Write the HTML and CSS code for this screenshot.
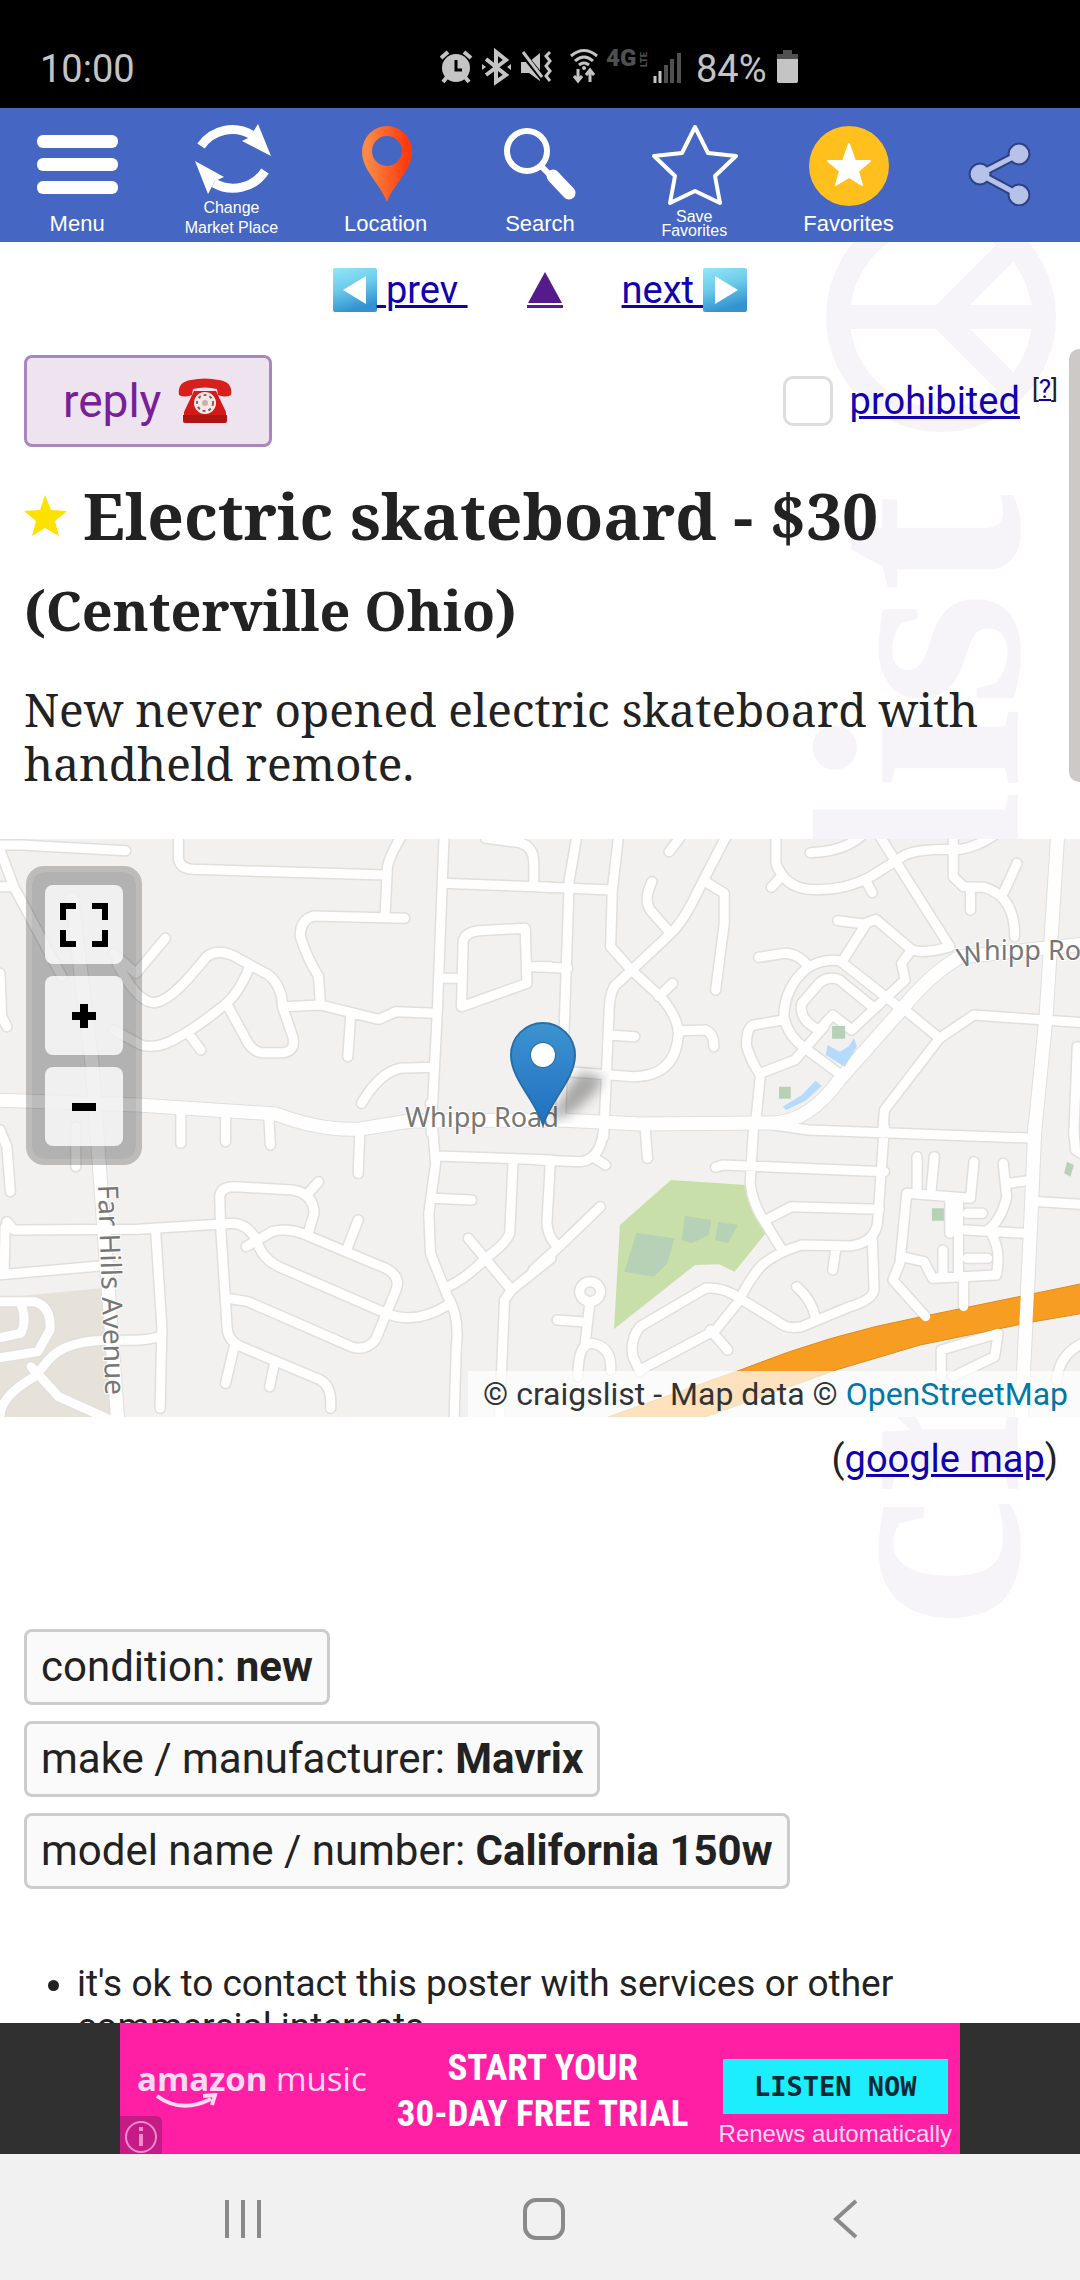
FILE: index.html
```html
<!DOCTYPE html>
<html lang="en">

<head>
    <meta charset="UTF-8">
    <meta name="viewport" content="width=device-width">
    <title>Electric skateboard - $30</title>
    <link rel="stylesheet" href="styles.css">
</head>

<body>
    <div class="status">
        <span class="time">10:00</span>
        <svg class="status-icons" width="244" height="40" viewBox="0 0 244 40" aria-hidden="true">
            <!-- alarm -->
            <g fill="none" stroke="#c4c4c4" stroke-width="4">
                <path d="M1 11L8 5M31 11L24 5M7 30L3 35M25 30L29 35"/>
                <circle cx="16" cy="21" r="14" fill="#c4c4c4" stroke="none"/>
                <path d="M16 13V23H22" stroke="#000" stroke-width="3"/>
            </g>
            <!-- bluetooth -->
            <path d="M46 12L66 28L56 35V5L66 13L46 28" fill="none" stroke="#c4c4c4" stroke-width="4"/>
            <path d="M42 17L46 20L42 23ZM71 17L67 20L71 23Z" fill="#c4c4c4"/>
            <!-- muted, vibrate -->
            <path d="M81 15H89L100 6V34L89 26H81Z" fill="#c4c4c4"/>
            <path d="M80 3L104 33" stroke="#000" stroke-width="6"/>
            <path d="M83 5L102 30" stroke="#c4c4c4" stroke-width="3"/>
            <path d="M110 5L106 9L110 14L106 19L110 24L106 29L110 34" fill="none" stroke="#c4c4c4" stroke-width="3"/>
            <!-- wifi -->
            <g fill="none" stroke="#c4c4c4" stroke-width="3">
                <path d="M131 9Q144 -2 157 9M135 14Q144 6 153 14M139 18Q144 14 149 18"/>
                <path d="M138 22V33M134 29L138 34L142 29M150 35V23M146 28L150 23L154 28"/>
            </g>
            <circle cx="144" cy="21" r="2" fill="#c4c4c4"/>
            <g fill="#505050" font-family="Roboto, sans-serif" font-weight="900">
                <text x="166" y="19" font-size="24">4G</text>
                <text transform="translate(207 20) rotate(-90)" font-size="9">LTE</text>
            </g>
            <path d="M215 29V36M220 24V36" stroke="#c4c4c4" stroke-width="3"/>
            <path d="M226 18V36M232 12V36M239 6V36" stroke="#505050" stroke-width="4"/>
        </svg>
        <span class="battery">84%</span>
        <svg width="22" height="34" viewBox="0 0 22 34" aria-hidden="true">
            <path d="M6 0H15V4H21V9H0V4H6Z" fill="#505050"/>
            <path d="M0 9H21V31Q21 33 19 33H2Q0 33 0 31Z" fill="#c4c4c4"/>
        </svg>
    </div>

    <nav class="toolbar">
        <button type="button">
            <svg viewBox="0 0 90 84"><g fill="#fff"><rect x="5" y="13" width="81" height="13" rx="6"/><rect x="5" y="36" width="81" height="13" rx="6"/><rect x="5" y="59" width="81" height="13" rx="6"/></g></svg>
            <span>Menu</span>
        </button>
        <button type="button" class="change">
            <svg viewBox="0 0 90 76">
                <path d="M15 24A38 38 0 0 1 66 13M79 49A38 38 0 0 1 28 61" fill="none" stroke="#fff" stroke-width="9"/>
                <path d="M72 2L85 34L56 19L64 15ZM9 39L38 55L29 59L22 72Z" fill="#fff"/>
            </svg>
            <span class="small">Change<br>Market Place</span>
        </button>
        <button type="button">
            <svg viewBox="0 0 90 84">
                <defs><linearGradient id="pin" x1="0" y1="0" x2="1" y2="0"><stop offset="0.1" stop-color="#f98a45"/><stop offset="0.9" stop-color="#ff3a0c"/></linearGradient></defs>
                <path d="M46 80C38 60 21 48 21 30A25 26 0 0 1 71 30C71 48 54 60 46 80ZM46 14A15 15 0 1 0 46 44A15 15 0 1 0 46 14Z" fill="url(#pin)" fill-rule="evenodd"/>
            </svg>
            <span>Location</span>
        </button>
        <button type="button">
            <svg viewBox="0 0 90 84">
                <circle cx="32" cy="29" r="20" fill="none" stroke="#fff" stroke-width="6"/>
                <path d="M45 43L56 54" stroke="#fff" stroke-width="6"/>
                <path d="M58 54L74 71" stroke="#fff" stroke-width="13" stroke-linecap="round"/>
            </svg>
            <span>Search</span>
        </button>
        <button type="button">
            <svg viewBox="0 0 90 84"><path d="M46 5L59 31L87 34L66 54L71 81L46 69L21 81L26 54L5 34L33 31Z" fill="none" stroke="#fff" stroke-width="4" stroke-linejoin="round"/></svg>
            <span class="small tight">Save<br>Favorites</span>
        </button>
        <button type="button">
            <svg viewBox="0 0 90 84">
                <circle cx="45" cy="44" r="40" fill="#ffc01e"/>
                <path d="M45 22L51 39L66 39L54 49L58 63L45 55L32 63L36 49L24 39L39 39Z" fill="#fff" stroke="#fff" stroke-width="2" stroke-linejoin="round"/>
            </svg>
            <span>Favorites</span>
        </button>
        <button type="button" aria-label="Share">
            <svg viewBox="0 0 90 84">
                <g stroke="#2d4083" fill="#2d4083"><path d="M61 32L22 52L61 73" fill="none" stroke-width="9"/><circle cx="22" cy="52" r="11"/><circle cx="61" cy="32" r="11"/><circle cx="61" cy="73" r="11"/></g>
                <g stroke="#b6c2e8" fill="#b6c2e8"><path d="M61 32L22 52L61 73" fill="none" stroke-width="5"/><circle cx="22" cy="52" r="9"/><circle cx="61" cy="32" r="9"/><circle cx="61" cy="73" r="9"/></g>
            </svg>
        </button>
    </nav>

    <main class="page">
        <!-- rotated site name behind the posting -->
        <svg class="watermark" width="280" height="1400" viewBox="800 242 280 1400" aria-hidden="true">
            <g fill="none" stroke="#f6f4f9" stroke-width="24">
                <circle cx="941" cy="317" r="103"/>
                <path d="M838 317H1044M941 317L1014 244M941 317L1014 390"/>
            </g>
            <text transform="translate(1018 1628) rotate(-90)" font-size="296" fill="#f6f4f9">craigslist</text>
        </svg>
        <div class="scrollbar"></div>

        <div class="pager">
            <a href="#"><svg width="44" height="44" viewBox="0 0 44 44"><defs><linearGradient id="sky" x1="0" y1="0" x2="0.3" y2="1"><stop offset="0" stop-color="#93e6f8"/><stop offset="0.5" stop-color="#6ccbea"/><stop offset="1" stop-color="#3392cf"/></linearGradient></defs><rect width="44" height="44" rx="2" fill="url(#sky)"/><path d="M10 22L33 8V36Z" fill="#fff"/></svg>&nbsp;prev&nbsp;</a>
            <a class="up" href="#" aria-label="up"><svg width="36" height="32" viewBox="0 0 36 32"><path d="M18 0L35 31H1Z" fill="#551a8b"/></svg></a>
            <a href="#">next&nbsp;<svg width="44" height="44" viewBox="0 0 44 44"><rect width="44" height="44" rx="2" fill="url(#sky)"/><path d="M35 22L12 8V36Z" fill="#fff"/></svg></a>
        </div>

        <div class="actions">
            <button type="button" class="reply">reply
                <svg width="56" height="46" viewBox="0 0 56 46" aria-hidden="true">
                    <path d="M2 17Q0 4 14 2Q28 -1 42 2Q56 4 54 17Q49 20 41 17L40 11Q28 8 16 11L15 17Q7 20 2 17Z" fill="#d91f1c"/>
                    <path d="M17 13H39L49 34V38H7V34Z" fill="#d31a18"/>
                    <path d="M6 37H50V43Q50 45 48 45H8Q6 45 6 43Z" fill="#b31412"/>
                    <circle cx="28" cy="25" r="11" fill="#f3e9e6"/>
                    <circle cx="28" cy="25" r="8" fill="none" stroke="#8c5a57" stroke-width="2" stroke-dasharray="3 3"/>
                    <circle cx="28" cy="25" r="3" fill="#c8b0ad"/>
                </svg>
            </button>
            <div class="flag">
                <input type="checkbox" id="prohibited">
                <label for="prohibited"><a href="#">prohibited</a></label>
                <sup>[<a href="#">?</a>]</sup>
            </div>
        </div>

        <h1>
            <svg width="43" height="42" viewBox="0 0 43 42" aria-hidden="true"><path d="M21 0L27 15L43 16L31 26L35 41L21 33L8 41L12 26L0 16L16 15Z" fill="#ffe100"/></svg>
            Electric skateboard - $30
        </h1>
        <h2>(Centerville Ohio)</h2>
        <p class="body">New never opened electric skateboard with handheld remote.</p>

        <div class="map">
            <svg class="map-canvas" viewBox="0 0 1080 578" preserveAspectRatio="xMidYMid slice" aria-hidden="true">
                <defs>
                    <g id="roads">
                        <g transform="translate(0 -9) scale(.3444 .3333)">
                            <path d="M-10 45H60L365 62M0 60L40 170L180 440M-20 170H40M0 430L5 560L20 590M480 325L395 430L330 370M340 400Q400 520 450 518C500 510 560 430 600 380Q640 350 700 390L780 435Q820 470 820 530L850 620Q860 665 820 668H760Q730 665 710 620L660 525M725 410Q690 500 640 535Q560 600 520 620Q460 660 410 645L330 600M550 615L583 660"/>
                            <path d="M518 0V85Q522 115 560 118L1120 135M1170 10Q1130 80 1125 110L1118 255M1175 265L910 258Q870 270 872 320Q890 380 925 440L930 520M825 530L930 525L1100 568L1150 545L1265 550M1018 560L1010 680M1290 0L1270 540L1252 910M1050 820Q1100 730 1160 715L1255 712M1285 160L1600 172M1410 25L1510 38Q1550 50 1550 100V165M1275 445H1340M1340 530L1345 330Q1355 305 1390 302L1525 295L1530 460ZM1530 410H1600M525 850V940M655 850V935M780 850L785 945"/>
                        </g>
                        <g transform="translate(540 -9) scale(.3444 .3333)">
                            <path d="M110 0L85 150L70 600L60 860M230 0L210 180L205 350L265 420L350 500Q400 560 402 610Q395 740 270 740L80 725M-10 170L205 180M-10 410L80 415M540 20L460 180Q420 270 380 310L215 470Q200 500 200 560L185 920M405 25L375 65M325 155Q300 210 320 240L375 305M480 155L535 190V280L510 480M385 460L345 500M200 615L275 620M405 602L480 600Q505 610 505 650"/>
                            <path d="M685 0V100Q710 170 780 178Q880 185 960 140L1060 75Q1100 55 1220 58Q1270 50 1320 15M700 140L672 172M945 150L965 188M785 68Q880 65 930 20M975 0L1190 350M1200 0V140L1230 170L1290 172Q1380 200 1378 320M1385 100L1345 190M1250 175V240M865 272L940 282L975 268L1080 360Q1120 372 1190 350M945 285L880 390M635 382L710 370Q750 370 780 410"/>
                            <path d="M1040 530L870 392Q820 385 775 415Q710 470 708 560Q720 620 770 655L880 740M965 530L870 450Q840 435 810 460L760 520Q750 570 810 600L850 555L905 600L1060 450L1050 400L1075 365M825 590L740 690L640 730M705 570L620 585Q598 595 600 650Q615 700 640 735L625 890M1060 540L1160 625L1000 840L995 910M1160 625L1260 555L1600 580M1560 650L1550 920"/>
                        </g>
                        <g transform="translate(0 291) scale(.3444 .3333)">
                            <path d="M1250 -80L1265 100L1245 250L1250 370L1300 500Q1335 560 1325 650L1318 880M1045 0L1040 130M1270 78L1600 90M1490 90L1480 310Q1470 340 1410 385Q1350 450 1290 475M1360 325L1485 480L1465 510L1450 880M1485 480L1600 385M1260 205L1370 210M0 0L20 50L30 185M220 -10V110M20 275L40 300L400 298L680 280Q720 285 745 330Q760 390 820 415L1110 545Q1200 590 1300 525M15 290L12 420M-10 435L290 408M452 305L470 590L465 835"/>
                            <path d="M470 615Q440 635 330 630Q200 630 150 680L100 740Q0 800 0 860M90 710L170 800L320 870M-10 515H100Q150 530 145 600L110 665L-10 685M60 520Q80 570 60 610L-10 625M640 280L638 200Q640 170 680 170L850 180Q910 190 912 250L895 310M925 155L895 190M715 350L790 305Q840 290 900 320L1120 415Q1165 440 1150 480L1090 630Q1060 665 1020 650L720 515L660 505M1040 270L1010 350M640 280L660 600Q665 635 700 650L930 750Q965 770 960 835M680 650L655 760M795 710L783 770"/>
                        </g>
                        <g transform="translate(540 291) scale(.3444 .3333)">
                            <path d="M-10 90L120 95Q180 85 185 -10M160 85L190 105M30 95L20 280Q25 330 55 350L-20 420M175 230L55 350M305 -10L312 85M620 -10L610 160Q620 230 655 280L700 355M510 112L530 105L1000 125M680 -15L780 0L1440 25M1000 -10L980 280Q970 340 900 348L760 345Q680 370 640 410Q600 460 580 510L510 600L290 720M655 270L730 230L985 238M860 350L850 420M745 470Q790 510 800 565M965 330L970 480Q965 510 900 530L760 590Q720 600 690 575L580 505Q530 470 480 475L290 590Q260 630 270 680L290 725M495 600L545 660"/>
                            <path d="M50 570L120 575M145 455A30 30 0 1 0 146 455M145 515L130 650M110 740Q110 640 150 640Q210 650 205 720M1095 80V185M1145 80L1135 190M1260 95L1250 205L1065 190L1045 400L1025 450L1120 560M1345 100L1355 200Q1340 270 1300 300M1430 150L1360 160M1215 205V440M1190 210V310M1240 250H1285M1235 300L1410 310M1310 310Q1340 360 1325 435L1140 445L1115 395L1050 380M1170 360V440M1240 385H1300M1230 440V530M1450 215L1600 225M1550 0L1555 60L1600 90M1165 740V660L1330 610L1320 680L1200 740M1600 630Q1510 660 1500 750"/>
                        </g>
                    </g>
                    <g id="avenues">
                        <path d="M-5 261L138 266L276 275Q320 292 360 290L410 282L560 281L640 285L774 284Q810 282 840 240L902 170Q930 135 960 118L1085 105M72 60L92 225L118 585M1058 -9L1046 178L1034 300M1035 285L1030 400L1021 585"/>
                    </g>
                    <linearGradient id="marker" x1="0" y1="0" x2="0" y2="1"><stop offset="0" stop-color="#3d93d0"/><stop offset="1" stop-color="#2070c0"/></linearGradient>
                    <filter id="soft"><feGaussianBlur stdDeviation="6"/></filter>
                </defs>
                <rect width="1080" height="578" fill="#f2f1f0"/>
                <path d="M0 459L103 449L119 578H0Z" fill="#e6e2da"/>
                <g transform="translate(540 291) scale(.3444 .3333)">
                    <path d="M380 150L600 165L655 310L565 425L520 403L450 405L215 597L232 285Z" fill="#c9dfa9"/>
                    <path d="M280 308L390 325L370 400L330 440L245 425ZM420 258L498 270L490 315L440 340L412 330ZM518 275L575 285L545 340L508 330ZM1138 235H1175V272H1138ZM1530 95L1550 105L1540 140L1522 130Z" fill="#b7d1b6"/>
                </g>
                <use href="#roads" class="casing"/>
                <use href="#avenues" class="casing wide"/>
                <path d="M608 578L743 530Q830 495 920 478L1085 444V474L1032 483L920 506L836 531L705 578Z" fill="#f79e22" stroke="#dd8c20"/>
                <use href="#roads" class="road"/>
                <use href="#avenues" class="road wide"/>
                <g transform="translate(540 -9) scale(.3444 .3333)">
                    <path d="M848 588H886V626H848ZM694 770H728V806H694Z" fill="#b7d1b6"/>
                    <path d="M835 645L870 665L895 650L912 625L920 650L885 710L830 675ZM705 830L760 795L800 752L818 768L770 812L715 840Z" fill="#b5dafc"/>
                </g>
                <g class="street">
                    <text x="405" y="288">Whipp Road</text>
                    <text x="984" y="121">hipp Road</text>
                    <text transform="translate(961 129) rotate(-18)">W</text>
                    <text class="long" transform="translate(98 346) rotate(88)">Far Hills Avenue</text>
                </g>
                <path d="M548 278L580 232L604 238Q594 262 560 280Z" opacity=".3" filter="url(#soft)"/>
                <path d="M543 286C536 262 511 240 511 216A32 32 0 0 1 575 216C575 240 550 262 543 286ZM543 204A12 12 0 1 0 543 228A12 12 0 1 0 543 204Z" fill="url(#marker)" stroke="#2a6da6" stroke-width="2" fill-rule="evenodd"/>
                <circle cx="543" cy="216" r="12" fill="#fff"/>
            </svg>
            <div class="controls">
                <button type="button" aria-label="Full screen"><svg width="48" height="44" viewBox="0 0 48 44"><path d="M3 17V3H16M32 3H45V17M45 27V41H32M16 41H3V27" fill="none" stroke="#000" stroke-width="6"/></svg></button>
                <button type="button" aria-label="Zoom in"><svg width="24" height="24" viewBox="0 0 24 24"><path d="M0 12H24M12 0V24" stroke="#000" stroke-width="8"/></svg></button>
                <button type="button" aria-label="Zoom out"><svg width="24" height="24" viewBox="0 0 24 24"><path d="M0 12H24" stroke="#000" stroke-width="8"/></svg></button>
            </div>
            <div class="credit">© craigslist - Map data © <a href="#">OpenStreetMap</a></div>
        </div>
        <p class="google">(<a href="#">google map</a>)</p>

        <div class="attrs">
            <span>condition: <b>new</b></span>
            <span>make / manufacturer: <b>Mavrix</b></span>
            <span>model name / number: <b>California 150w</b></span>
        </div>

        <ul class="notices">
            <li>it's ok to contact this poster with services or other commercial interests</li>
        </ul>
    </main>

    <aside class="ad">
        <div class="banner">
            <div class="brand"><b>amazon</b> music
                <svg width="64" height="16" viewBox="0 0 64 16" aria-hidden="true"><path d="M2 3Q26 21 56 6M48 3L60 2L57 12" fill="none" stroke="#ffd9f2" stroke-width="4"/></svg>
            </div>
            <div class="pitch">START YOUR<br>30-DAY FREE TRIAL</div>
            <div class="offer">
                <button type="button">LISTEN NOW</button>
                <span>Renews automatically</span>
            </div>
            <svg class="info" width="42" height="38" viewBox="0 0 42 38" aria-hidden="true"><path d="M0 0H36Q42 0 42 6V38H0Z" fill="#c51b86"/><g fill="none" stroke="#f38bcb" stroke-width="2"><circle cx="21" cy="21" r="15"/><path d="M21 18V30M21 11V15" stroke-width="4"/></g></svg>
        </div>
    </aside>

    <nav class="keys">
        <button type="button" aria-label="Recents"><svg width="42" height="42" viewBox="0 0 42 42"><path d="M5 2V40M21 2V40M37 2V40"/></svg></button>
        <button type="button" aria-label="Home"><svg width="42" height="42" viewBox="0 0 42 42"><rect x="2" y="2" width="38" height="38" rx="11"/></svg></button>
        <button type="button" aria-label="Back"><svg width="42" height="42" viewBox="0 0 42 42"><path d="M32 3L12 21L32 39"/></svg></button>
    </nav>
</body>

</html>
```

FILE: styles.css
```css
* {
    box-sizing: border-box;
    margin: 0;
    padding: 0;
}
body {
    display: flex;
    flex-direction: column;
    height: 100vh;
    background: #fff;
    color: #222;
    font-family: Roboto, sans-serif;
    font-size: 38px;
}
button {
    border: 0;
    background: none;
    font: inherit;
    color: inherit;
}
a {
    color: #1000b0;
    text-decoration-thickness: 3px;
}

/* phone status bar */
.status {
    flex: none;
    display: flex;
    align-items: center;
    height: 108px;
    padding: 26px 40px 0;
    background: #000;
    color: #c4c4c4;
}
.time {
    width: 400px;
}
.battery {
    margin: 0 10px 0 12px;
}
.time, .battery {
    padding-top: 3px;
}

.toolbar {
    flex: none;
    display: grid;
    grid-template-columns: repeat(7, 1fr);
    height: 134px;
    padding: 14px 0 4px;
    background: #4566c2;
    color: #fff;
    font-family: "Liberation Sans", sans-serif;
    font-size: 22px;
    line-height: 28px;
}
.toolbar button {
    display: flex;
    flex-direction: column;
    align-items: center;
    justify-content: space-between;
}
.toolbar svg {
    flex: none;
    width: 90px;
    height: 84px;
}
.toolbar .change svg {
    height: 76px;
}
.toolbar .small {
    font-size: 16px;
    line-height: 20px;
}
.toolbar .tight {
    line-height: 14px;
}

/* posting */
.page {
    flex: 1;
    min-height: 0;
    position: relative;
    z-index: 0;
    overflow: hidden;
}
.watermark {
    position: absolute;
    top: 0;
    right: 0;
    z-index: -1;
    font-family: "Liberation Serif", serif;
    font-weight: bold;
}
.scrollbar {
    position: absolute;
    top: 107px;
    right: 0;
    width: 11px;
    height: 433px;
    border-radius: 10px 0 0 10px;
    background: #cdc9c6;
}
.pager {
    display: flex;
    justify-content: center;
    align-items: center;
    gap: 59px;
    height: 96px;
}
.pager svg {
    vertical-align: -9px;
}
.pager .up {
    height: 36px;
    border-bottom: 3px solid #551a8b;
}
.pager .up svg {
    display: block;
}
.actions {
    display: flex;
    justify-content: space-between;
    padding: 17px 22px 0 24px;
}
.reply {
    display: flex;
    align-items: center;
    gap: 16px;
    height: 92px;
    padding: 0 36px;
    border: 3px solid #a986bd;
    border-radius: 8px;
    background: #eee4f0;
    color: #77209a;
    font-size: 46px;
    line-height: 50px;
}
.flag {
    display: flex;
    align-items: center;
}
.flag input {
    appearance: none;
    width: 50px;
    height: 50px;
    margin-right: 17px;
    border: 3px solid #ddd;
    border-radius: 10px;
    background: #fff;
}
.flag sup {
    margin-left: 12px;
    padding-bottom: 24px;
    font-size: 26px;
    line-height: 28px;
}
.flag sup a {
    text-decoration-thickness: 2px;
}
h1, h2, .body {
    padding: 0 24px;
    font-family: "Noto Serif", "DejaVu Serif Condensed", "DejaVu Serif", serif;
}
h1 {
    display: flex;
    align-items: center;
    gap: 16px;
    padding-top: 23px;
    font-size: 64px;
    line-height: 92px;
}
h2 {
    font-size: 54px;
    line-height: 96px;
}
.body {
    padding-top: 24px;
    font-size: 46px;
    line-height: 54px;
}

.map {
    position: relative;
    height: 578px;
    margin-top: 49px;
    overflow: hidden;
}
.map-canvas {
    display: block;
    width: 100%;
    height: 100%;
}
.casing, .road {
    fill: none;
    stroke: #e1dfdc;
    stroke-width: 12px;
    stroke-linecap: round;
    stroke-linejoin: round;
}
.road {
    stroke: #fefefe;
    stroke-width: 9px;
}
.casing.wide {
    stroke-width: 15px;
}
.road.wide {
    stroke-width: 13px;
}
#roads path {
    vector-effect: non-scaling-stroke;
}
.street {
    fill: #777;
    stroke: #fff;
    stroke-width: 2px;
    paint-order: stroke;
    font-family: "Noto Sans", sans-serif;
    font-size: 27px;
}
.street .long {
    font-size: 28px;
}
.controls {
    position: absolute;
    top: 27px;
    left: 26px;
    display: grid;
    gap: 12px;
    padding: 13px;
    border: 6px solid rgba(0, 0, 0, .22);
    border-radius: 18px;
    background: rgba(0, 0, 0, .26);
    background-clip: padding-box;
}
.controls button {
    display: grid;
    place-items: center;
    width: 78px;
    height: 79px;
    border-radius: 8px;
    background: rgba(255, 255, 255, .8);
}
.credit {
    position: absolute;
    right: 0;
    bottom: 0;
    padding: 0 12px 0 15px;
    background: rgba(255, 255, 255, .7);
    color: #333;
    font-size: 32px;
    line-height: 46px;
}
.credit a {
    color: #0078a8;
    text-decoration: none;
}
.google {
    padding: 19px 22px 0;
    text-align: right;
    line-height: 46px;
}
.attrs {
    display: flex;
    flex-direction: column;
    align-items: flex-start;
    gap: 16px;
    padding: 147px 24px 0;
    font-size: 42px;
}
.attrs span {
    padding: 0 14px;
    border: 3px solid #ccc;
    border-radius: 8px;
    background: #fafafa;
    line-height: 70px;
}
.notices {
    padding: 73px 100px 0 77px;
    font-size: 37px;
    line-height: 43px;
}

/* ad */
.ad {
    flex: none;
    position: relative;
    z-index: 1;
    background: #303030;
}
.banner {
    position: relative;
    display: flex;
    justify-content: space-between;
    width: 840px;
    height: 131px;
    margin: 0 auto;
    padding: 0 8px 0 17px;
    background: #ff1fa5;
    color: #fff;
}
.brand {
    position: relative;
    padding-top: 34px;
    color: #ffd9f2;
    font-family: "Open Sans", sans-serif;
    font-size: 33px;
    line-height: 44px;
}
.brand svg {
    position: absolute;
    top: 70px;
    left: 18px;
}
.pitch {
    padding-top: 22px;
    font-family: "Liberation Sans Narrow", "Roboto Condensed", "Liberation Sans", sans-serif;
    font-size: 37px;
    font-weight: bold;
    line-height: 46px;
    text-align: center;
}
.offer {
    display: flex;
    flex-direction: column;
    align-items: center;
    padding-top: 36px;
    color: #ffd9f2;
    font-family: "Liberation Sans", sans-serif;
    font-size: 24px;
    line-height: 40px;
}
.offer button {
    width: 225px;
    height: 56px;
    background: #1ceefd;
    color: #102a35;
    font-family: "DejaVu Sans Mono", monospace;
    font-size: 27px;
    font-weight: bold;
}
.info {
    position: absolute;
    left: 0;
    bottom: 0;
}

.keys {
    flex: none;
    display: grid;
    grid-template-columns: repeat(3, 1fr);
    height: 126px;
    padding: 4px 84px 0 92px;
    background: #f1f1f1;
}
.keys button {
    display: grid;
    place-items: center;
}
.keys svg {
    fill: none;
    stroke: #8a8a8a;
    stroke-width: 4px;
}
```
